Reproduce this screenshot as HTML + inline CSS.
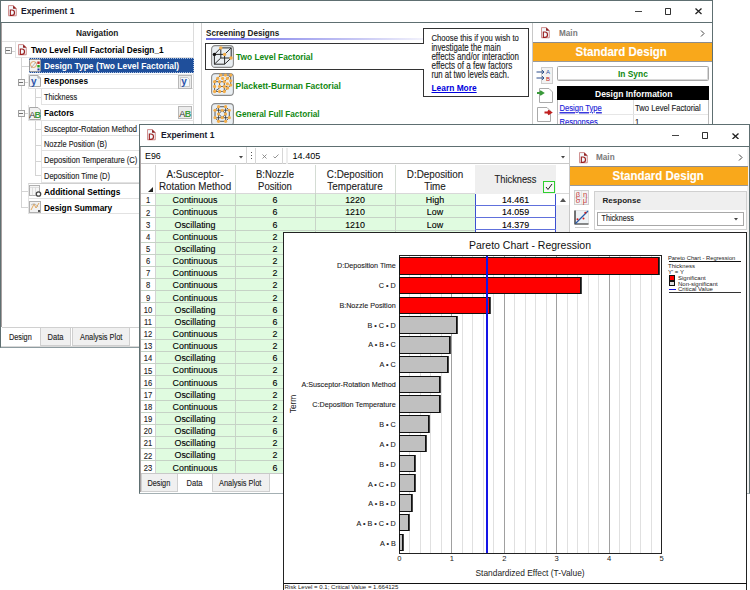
<!DOCTYPE html>
<html><head><meta charset="utf-8">
<style>
*{box-sizing:border-box;margin:0;padding:0}
html,body{width:750px;height:590px;overflow:hidden;background:#fff;font-family:"Liberation Sans",sans-serif;color:#000}
.a{position:absolute}
.t{position:absolute;white-space:nowrap;line-height:1}
.b{font-weight:bold}
.k{-webkit-text-stroke:0.12px currentColor}
.s28{transform:scaleY(1.28);transform-origin:0 84.65%;-webkit-text-stroke:0.1px currentColor}
.s12{transform:scaleY(1.12);transform-origin:0 84.65%;-webkit-text-stroke:0.1px currentColor}
.s17{transform:scaleY(1.17);transform-origin:0 84.65%;-webkit-text-stroke:0.1px currentColor}
</style></head><body>

<!-- ============ BACK WINDOW ============ -->
<div class="a" id="w1" style="left:0;top:0;width:713px;height:348px;background:#fff;border:1px solid #5e6f71;border-bottom-color:#8e9ca0">
</div>
<div class="a" style="left:1px;top:23px;width:1px;height:304px;background:#a8a0a0"></div>
<div class="a" style="left:1px;top:346px;width:711px;height:1px;background:#d8d8d8"></div>
<!-- title bar -->
<div class="a" style="left:1px;top:22px;width:711px;height:1px;background:#5e6f71"></div>
<svg class="a" style="left:8px;top:5px" width="9" height="12" viewBox="0 0 10 13"><path d="M0.5 0.5H6L9.2 3.7V11.8H0.5Z" fill="#f3f8fb" stroke="#c98080" stroke-width="1"/><path d="M5.6 0.3L9.4 4.1H5.6Z" fill="#8e1b1b"/><path d="M2.6 5.4H4.4Q7.2 5.4 7.2 8.4Q7.2 11.3 4.4 11.3H2.6Z" fill="none" stroke="#9b2020" stroke-width="1.3"/></svg>
<div class="t b" style="left:21px;top:7px;font-size:8.5px;color:#1a1a2e">Experiment 1</div>
<!-- min max close -->
<div class="a" style="left:635px;top:11px;width:6.5px;height:1.2px;background:#444"></div>
<div class="a" style="left:665px;top:8.3px;width:6.3px;height:6.3px;border:1.2px solid #333;border-radius:.8px"></div>
<svg class="a" style="left:694.5px;top:8.3px" width="7" height="6.5" viewBox="0 0 7 6.5"><path d="M0.5 0.5L6.5 6M6.5 0.5L0.5 6" stroke="#222" stroke-width="1.3"/></svg>

<!-- left nav panel -->
<div class="a" style="left:2px;top:23px;width:192px;height:304px;border-right:1px solid #dcdcdc;background:#fff"></div>
<div class="t b" style="left:76px;top:29px;font-size:8.3px;color:#1a1a1a">Navigation</div>
<div class="a" style="left:2px;top:41px;width:192px;height:1px;background:#e2e2e2"></div>

<!-- tree lines -->
<div class="a" style="left:21px;top:57.5px;width:1px;height:150px;background:#d4d4d4"></div>
<div class="a" style="left:22px;top:65.5px;width:7px;height:1px;background:#d4d4d4"></div>
<div class="a" style="left:35px;top:88.5px;width:1px;height:87px;background:#d4d4d4"></div>
<div class="a" style="left:35px;top:97px;width:6px;height:1px;background:#d4d4d4"></div>
<div class="a" style="left:35px;top:128.5px;width:6px;height:1px;background:#d4d4d4"></div>
<div class="a" style="left:35px;top:144.5px;width:6px;height:1px;background:#d4d4d4"></div>
<div class="a" style="left:35px;top:160.5px;width:6px;height:1px;background:#d4d4d4"></div>
<div class="a" style="left:35px;top:175.3px;width:6px;height:1px;background:#d4d4d4"></div>
<div class="a" style="left:22px;top:191px;width:6px;height:1px;background:#d4d4d4"></div>
<div class="a" style="left:22px;top:207px;width:6px;height:1px;background:#d4d4d4"></div>
<div class="a" style="left:11px;top:50.5px;width:4px;height:1px;background:#d4d4d4"></div>
<div class="a" style="left:24px;top:81.5px;width:4px;height:1px;background:#d4d4d4"></div>
<div class="a" style="left:24px;top:112.5px;width:4px;height:1px;background:#d4d4d4"></div>
<div class="a" style="left:15px;top:41.5px;width:179px;height:16px;border-left:1px solid #e2e2e2;border-bottom:1px solid #e2e2e2"></div>
<div class="a" style="left:4.5px;top:47px;width:7px;height:7px;border:1px solid #a0a0a0;background:#f8f8f8"></div>
<div class="a" style="left:6.0px;top:50px;width:4px;height:1px;background:#707070"></div>
<svg class="a" style="left:18px;top:44px" width="9" height="12" viewBox="0 0 10 13"><path d="M0.5 0.5H6L9.2 3.7V11.8H0.5Z" fill="#f3f8fb" stroke="#c98080" stroke-width="1"/><path d="M5.6 0.3L9.4 4.1H5.6Z" fill="#8e1b1b"/><path d="M2.6 5.4H4.4Q7.2 5.4 7.2 8.4Q7.2 11.3 4.4 11.3H2.6Z" fill="none" stroke="#9b2020" stroke-width="1.3"/></svg>
<div class="t b" style="left:31px;top:46px;font-size:8.3px;color:#000">Two Level Full Factorial Design_1</div>
<div class="a" style="left:28.5px;top:58px;width:165px;height:14.5px;background:#1f4f9b;border:1px dotted #a8bedf"></div>
<svg class="a" style="left:29px;top:59px" width="12" height="13" viewBox="0 0 12 13"><rect x="0.5" y="0.5" width="11" height="12" rx="1" fill="#f2f2f2" stroke="#9a9a9a"/><circle cx="4.5" cy="5.5" r="3" fill="none" stroke="#e0a060" stroke-width="1"/><path d="M2 9L7 3" stroke="#999" stroke-width=".7"/><rect x="8.3" y="2.5" width="2.4" height="2.4" fill="#c02020"/><rect x="8.3" y="6" width="2.4" height="2.4" fill="#20a020"/><rect x="8.5" y="9.5" width="2" height="2" fill="#2030a0"/></svg>
<div class="t b" style="left:44px;top:62px;font-size:8.45px;color:#fff">Design Type (Two Level Factorial)</div>
<div class="a" style="left:28px;top:73.5px;width:166px;height:15px;border-left:1px solid #e2e2e2;border-bottom:1px solid #e2e2e2;border-top:1px solid #e2e2e2"></div>
<div class="a" style="left:17.5px;top:78.5px;width:7px;height:7px;border:1px solid #a0a0a0;background:#f8f8f8"></div>
<div class="a" style="left:19.0px;top:81.5px;width:4px;height:1px;background:#707070"></div>
<svg class="a" style="left:29px;top:75px" width="12" height="12" viewBox="0 0 12 12"><path d="M0.5 0.5H9L11.5 3V11.5H0.5Z" fill="#eef4f8" stroke="#a8a8a8"/><path d="M9 0.5V3H11.5" fill="none" stroke="#a8a8a8"/><text x="2" y="9.5" font-family="Liberation Sans" font-size="10" font-weight="bold" fill="#2c52a8">y</text></svg>
<div class="t b" style="left:44px;top:78px;font-size:8.25px;color:#000">Responses</div>
<svg class="a" style="left:178px;top:74.5px" width="14" height="14" viewBox="0 0 14 14"><rect x="0.5" y="0.5" width="13" height="13" fill="#ececec" stroke="#b8b8b8"/><path d="M2.5 2.5H9.5L11.5 4.5V11.5H2.5Z" fill="#f4f8fb" stroke="#b0b0b0" stroke-width=".6"/><text x="3.3" y="10.3" font-family="Liberation Sans" font-size="10" font-weight="bold" fill="#2c52a8">y</text></svg>
<div class="a" style="left:41px;top:88.5px;width:153px;height:16px;border-left:1px solid #e2e2e2;border-bottom:1px solid #e2e2e2"></div>
<div class="t s28" style="left:44px;top:93.5px;font-size:7.35px;color:#222">Thickness</div>
<div class="a" style="left:28px;top:104.5px;width:166px;height:16px;border-left:1px solid #e2e2e2;border-bottom:1px solid #e2e2e2"></div>
<div class="a" style="left:17.5px;top:109.5px;width:7px;height:7px;border:1px solid #a0a0a0;background:#f8f8f8"></div>
<div class="a" style="left:19.0px;top:112.5px;width:4px;height:1px;background:#707070"></div>
<svg class="a" style="left:29px;top:106.5px" width="12" height="13" viewBox="0 0 12 13"><path d="M0.5 0.5H9L11.5 3V12.5H0.5Z" fill="#f2f2f2" stroke="#a8a8a8"/><text x="0.3" y="10.5" font-family="Liberation Sans" font-size="9" fill="#333">A</text><text x="5.6" y="10.5" font-family="Liberation Sans" font-size="9" font-weight="bold" fill="#3c9a3c">B</text></svg>
<div class="t b" style="left:44px;top:109px;font-size:8.3px;color:#000">Factors</div>
<svg class="a" style="left:178px;top:106px" width="14" height="13" viewBox="0 0 14 13"><rect x="0.5" y="0.5" width="13" height="12" fill="#ececec" stroke="#b8b8b8"/><text x="1.3" y="10.5" font-family="Liberation Sans" font-size="9" fill="#333">A</text><text x="6.8" y="10.5" font-family="Liberation Sans" font-size="9" font-weight="bold" fill="#3c9a3c">B</text></svg>
<div class="a" style="left:41px;top:120.5px;width:153px;height:15.3px;border-left:1px solid #e2e2e2;border-bottom:1px solid #e2e2e2"></div>
<div class="t s28" style="left:44px;top:125.7px;font-size:7.65px;color:#222">Susceptor-Rotation Method</div>
<div class="a" style="left:41px;top:135.3px;width:153px;height:16.2px;border-left:1px solid #e2e2e2;border-bottom:1px solid #e2e2e2"></div>
<div class="t s28" style="left:44px;top:141.0px;font-size:7.4px;color:#222">Nozzle Position (B)</div>
<div class="a" style="left:41px;top:151px;width:153px;height:16.5px;border-left:1px solid #e2e2e2;border-bottom:1px solid #e2e2e2"></div>
<div class="t s28" style="left:44px;top:156.8px;font-size:7.62px;color:#222">Deposition Temperature (C)</div>
<div class="a" style="left:41px;top:167px;width:153px;height:16.0px;border-left:1px solid #e2e2e2;border-bottom:1px solid #e2e2e2"></div>
<div class="t s28" style="left:44px;top:172.6px;font-size:7.47px;color:#222">Deposition Time (D)</div>
<div class="a" style="left:28px;top:182.5px;width:166px;height:16px;border-left:1px solid #e2e2e2;border-bottom:1px solid #e2e2e2;border-top:1px solid #d0d0d0"></div>
<svg class="a" style="left:29px;top:185px" width="13" height="12" viewBox="0 0 13 12"><rect x="0.5" y="0.5" width="10" height="10" fill="#f6f6f6" stroke="#b0b0b0"/><path d="M0.5 2.5H10.5M3.5 2.5V10.5M6.5 2.5V10.5" stroke="#d0d0d0" stroke-width=".6"/><circle cx="9.5" cy="9" r="2.2" fill="#fff" stroke="#444" stroke-width="1.3"/></svg>
<div class="t b" style="left:44px;top:188px;font-size:8.4px;color:#000">Additional Settings</div>
<div class="a" style="left:28px;top:198.5px;width:166px;height:15.5px;border-left:1px solid #e2e2e2;border-bottom:1px solid #e2e2e2"></div>
<svg class="a" style="left:29px;top:200.5px" width="12" height="12" viewBox="0 0 12 12"><rect x="0.5" y="0.5" width="11" height="11" fill="#f2f2f2" stroke="#b0b0b0"/><path d="M2 9L5 3L7 7L10 2" fill="none" stroke="#e0a050" stroke-width=".9"/><path d="M2 4Q6 1 9 6" fill="none" stroke="#999" stroke-width=".6"/><rect x="9" y="9" width="2" height="2" fill="#555"/></svg>
<div class="t b" style="left:44px;top:203.5px;font-size:8.35px;color:#000">Design Summary</div>

<!-- back tabs -->
<div class="a" style="left:2px;top:327px;width:710px;height:1px;background:#d0d0d0"></div>
<div class="a" style="left:40px;top:328px;width:31px;height:18px;background:#f0f0f0;border:1px solid #cfcfcf;border-top:none"></div>
<div class="a" style="left:72px;top:328px;width:58px;height:18px;background:#f0f0f0;border:1px solid #cfcfcf;border-top:none"></div>
<div class="t s28" style="left:9px;top:334px;font-size:7.3px;color:#222">Design</div>
<div class="t s28" style="left:47.5px;top:334px;font-size:7.55px;color:#222">Data</div>
<div class="t s28" style="left:80px;top:334px;font-size:7.4px;color:#222">Analysis Plot</div>

<!-- splitter / middle panel -->
<div class="a" style="left:201px;top:23px;width:1px;height:304px;background:#d0d0d0"></div>
<div class="t b" style="left:206px;top:30px;font-size:8.15px;color:#222">Screening Designs</div>
<div class="a" style="left:206px;top:38px;width:220px;height:1.5px;background:linear-gradient(90deg,#7070e8,#c8c8f4 70%,#f4f4fc)"></div>
<div class="a" style="left:205px;top:43px;width:219px;height:27px;border:1px solid #333;border-right:none"></div>
<!-- icons -->
<svg class="a" style="left:211px;top:45px" width="23" height="23" viewBox="0 0 23 23"><rect x="0.6" y="0.6" width="21.8" height="21.8" rx="3.5" fill="#e9eef2" stroke="#8a8a8a" stroke-width="1.1"/><g fill="none" stroke="#2a2a2a" stroke-width="1"><path d="M3.4 9.4H13.6V19.2H3.4Z"/><path d="M9.8 2.9H20.2V13H9.8Z"/><path d="M3.4 9.4L9.8 2.9M13.6 9.4L20.2 2.9M13.6 19.2L20.2 13M3.4 19.2L9.8 13"/></g><circle cx="3.4" cy="9.4" r="1.7" fill="#111"/><g fill="#f4ae4a"><circle cx="9.8" cy="2.9" r="1.7"/><circle cx="13.6" cy="9.4" r="1.7"/><circle cx="20" cy="13" r="1.7"/></g></svg>
<svg class="a" style="left:210.5px;top:73.3px" width="23" height="23" viewBox="0 0 23 23"><rect x="0.6" y="0.6" width="21.8" height="21.8" rx="3.5" fill="#e9eef2" stroke="#8a8a8a" stroke-width="1.1"/><g fill="none" stroke="#333" stroke-width=".8"><path d="M3.6 8.7L9.7 2.1H19.7V12.1L13.3 18.5H3.6Z"/><path d="M3.6 8.7H13.3V18.5M13.3 8.7L19.7 2.1M8.6 8.7V15L5 17.5M8.6 13.5H16.4"/></g><g fill="#f4ae4a"><circle cx="9.7" cy="2.1" r="1.65"/><circle cx="14.5" cy="2.1" r="1.65"/><circle cx="19.7" cy="2.1" r="1.65"/><circle cx="6.66" cy="5.4" r="1.65"/><circle cx="11.6" cy="5.4" r="1.65"/><circle cx="16.4" cy="5.4" r="1.65"/><circle cx="19.7" cy="7.8" r="1.65"/><circle cx="3.6" cy="8.7" r="1.65"/><circle cx="8.6" cy="8.7" r="1.65"/><circle cx="13.3" cy="8.7" r="1.65"/><circle cx="16.4" cy="10.9" r="1.65"/><circle cx="19.7" cy="12.1" r="1.65"/><circle cx="3.6" cy="13.5" r="1.65"/><circle cx="8.6" cy="13.5" r="1.65"/><circle cx="13.3" cy="13.5" r="1.65"/><circle cx="16.4" cy="15.2" r="1.65"/><circle cx="3.6" cy="18.5" r="1.65"/><circle cx="8.6" cy="18.5" r="1.65"/><circle cx="13.3" cy="18.5" r="1.65"/></g></svg>
<svg class="a" style="left:210.8px;top:103px" width="23" height="23" viewBox="0 0 23 23"><rect x="0.6" y="0.6" width="21.8" height="21.8" rx="3.5" fill="#e9eef2" stroke="#8a8a8a" stroke-width="1.1"/><g fill="none" stroke="#333" stroke-width=".8"><path d="M7.54 3.71H14.6L18.3 7.24V14.7L14.6 18.3H7.54L4 14.7V7.24Z"/><path d="M4 7.24H18.3M4 14.7H18.3M7.54 3.71V18.3M14.6 3.71V18.3M7.54 11L11.3 7.24L14.6 11L11.3 14.7Z"/></g><g fill="#f4ae4a"><circle cx="7.54" cy="3.71" r="1.6"/><circle cx="14.6" cy="3.71" r="1.6"/><circle cx="4" cy="7.24" r="1.6"/><circle cx="11.3" cy="7.24" r="1.6"/><circle cx="18.3" cy="7.24" r="1.6"/><circle cx="7.54" cy="11" r="1.6"/><circle cx="14.6" cy="11" r="1.6"/><circle cx="4" cy="14.7" r="1.6"/><circle cx="11.3" cy="14.7" r="1.6"/><circle cx="18.3" cy="14.7" r="1.6"/><circle cx="7.54" cy="18.3" r="1.6"/><circle cx="14.6" cy="18.3" r="1.6"/></g></svg>
<div class="t b" style="left:236px;top:52.7px;font-size:8.35px;color:#118811">Two Level Factorial</div>
<div class="t b" style="left:235.5px;top:81.7px;font-size:8.5px;color:#118811">Plackett-Burman Factorial</div>
<div class="t b" style="left:235.5px;top:110.8px;font-size:8.22px;color:#118811">General Full Factorial</div>

<!-- tooltip -->
<div class="a" style="left:423px;top:28px;width:106px;height:69px;border:1px solid #333;background:#fff"></div>
<div class="a" style="left:422px;top:44px;width:3px;height:25px;background:#fff"></div>
<div class="t s28" style="left:431.4px;top:35.37px;font-size:7.72px;color:#222">Choose this if you wish to</div>
<div class="t s28" style="left:431.4px;top:44.55px;font-size:7.80px;color:#222">investigate the main</div>
<div class="t s28" style="left:431.4px;top:53.63px;font-size:8.00px;color:#222">effects and/or interaction</div>
<div class="t s28" style="left:431.4px;top:62.89px;font-size:8.10px;color:#222">effects of a few factors</div>
<div class="t s28" style="left:431.4px;top:72.18px;font-size:7.82px;color:#222">run at two levels each.</div>
<div class="t b" style="left:431.5px;top:84px;font-size:8.4px;color:#0000dd;text-decoration:underline">Learn More</div>

<!-- right panel back -->
<div class="a" style="left:532px;top:23px;width:1px;height:304px;background:#c8c8c8"></div>
<svg class="a" style="left:541px;top:27px" width="9" height="12" viewBox="0 0 10 13"><path d="M0.5 0.5H6L9.2 3.7V11.8H0.5Z" fill="#f3f8fb" stroke="#c98080" stroke-width="1"/><path d="M5.6 0.3L9.4 4.1H5.6Z" fill="#8e1b1b"/><path d="M2.6 5.4H4.4Q7.2 5.4 7.2 8.4Q7.2 11.3 4.4 11.3H2.6Z" fill="none" stroke="#9b2020" stroke-width="1.3"/></svg>
<div class="t b" style="left:559px;top:30px;font-size:8.2px;color:#7a7a7a">Main</div>
<svg class="a" style="left:700px;top:30px" width="5" height="7" viewBox="0 0 5 7"><path d="M1 0.5L4 3.5L1 6.5" fill="none" stroke="#444" stroke-width="1"/></svg>
<div class="a" style="left:533px;top:42px;width:179px;height:20px;background:#f9a81b;border-top:1px solid #8c8c8c;border-bottom:1px solid #9a9a9a"></div>
<div class="t b s12" style="left:575.5px;top:46.5px;font-size:11.5px;color:#fff">Standard Design</div>
<!-- side icons -->
<svg class="a" style="left:536px;top:67px" width="17" height="17" viewBox="0 0 17 17"><rect x="5.5" y="0.5" width="11" height="16" fill="#f2f2f2" stroke="#ccc"/><path d="M0.5 5H8M6 3.2L8 5L6 6.8M0.5 11H8M6 9.2L8 11L6 12.8" stroke="#2a4d8a" stroke-width="1" fill="none"/><text x="10" y="7" font-size="6" fill="#2a4d9a" font-family="Liberation Sans">A</text><text x="10" y="14" font-size="6" fill="#c02020" font-family="Liberation Sans">B</text></svg>
<svg class="a" style="left:537px;top:88px" width="16" height="15" viewBox="0 0 16 15"><path d="M2.5 0.5H12L15.5 4V14.5H2.5Z" fill="#fff" stroke="#aaa"/><path d="M0 5H5M3 3L6 5L3 7" stroke="#3a9a3a" stroke-width="2" fill="none"/></svg>
<svg class="a" style="left:537px;top:107px" width="16" height="15" viewBox="0 0 16 15"><path d="M0.5 0.5H10L13.5 4V14.5H0.5Z" fill="#fff" stroke="#aaa"/><path d="M7.5 5.5H13M11 3.5L14 5.5L11 7.5" stroke="#c02020" stroke-width="2" fill="none"/></svg>
<div class="a" style="left:557px;top:66px;width:152px;height:15px;border:1px solid #a8a8a8;border-radius:1.5px;box-shadow:inset -1px -1px 0 #d8d8d8;background:#fff"></div>
<div class="t b" style="left:618px;top:70.3px;font-size:8.4px;color:#118811">In Sync</div>
<div class="a" style="left:557px;top:86px;width:152px;height:14px;background:#000"></div>
<div class="t b" style="left:595px;top:90.3px;font-size:8.5px;color:#fff">Design Information</div>
<div class="a" style="left:557px;top:100px;width:152px;height:30px;border-left:1px solid #bbb;border-right:1px solid #bbb"></div>
<div class="a" style="left:633px;top:100px;width:1px;height:30px;background:#ddd"></div>
<div class="a" style="left:558px;top:114px;width:150px;height:1px;background:#e6e6e6"></div>
<div class="t s28" style="left:559.5px;top:105.2px;font-size:7.65px;color:#1a1ad8;text-decoration:underline">Design Type</div>
<div class="t s28" style="left:635px;top:105.2px;font-size:7.65px;color:#222">Two Level Factorial</div>
<div class="t s28" style="left:559.5px;top:119.2px;font-size:7.65px;color:#1a1ad8;text-decoration:underline">Responses</div>
<div class="t s28" style="left:635px;top:119.2px;font-size:7.65px;color:#222">1</div>

<!-- ============ MIDDLE WINDOW ============ -->
<div class="a" id="w2" style="left:139px;top:124px;width:611px;height:370px;background:#fff;border:1px solid #5e6f71;border-bottom-color:#a4b0b3"></div>
<div class="a" style="left:140px;top:147px;width:1px;height:345px;background:#a8a0a0"></div>
<div class="a" style="left:747px;top:147px;width:2px;height:346px;background:#f2f2f2"></div>
<div class="a" style="left:140px;top:146px;width:609px;height:1px;background:#5e6f71"></div>
<svg class="a" style="left:147px;top:129px" width="9" height="12" viewBox="0 0 10 13"><path d="M0.5 0.5H6L9.2 3.7V11.8H0.5Z" fill="#f3f8fb" stroke="#c98080" stroke-width="1"/><path d="M5.6 0.3L9.4 4.1H5.6Z" fill="#8e1b1b"/><path d="M2.6 5.4H4.4Q7.2 5.4 7.2 8.4Q7.2 11.3 4.4 11.3H2.6Z" fill="none" stroke="#9b2020" stroke-width="1.3"/></svg>
<div class="t b" style="left:161px;top:131px;font-size:8.5px;color:#1a1a2e">Experiment 1</div>
<div class="a" style="left:672px;top:135px;width:6.5px;height:1.2px;background:#444"></div>
<div class="a" style="left:702px;top:132.3px;width:6.3px;height:6.3px;border:1.2px solid #333;border-radius:.8px"></div>
<svg class="a" style="left:732px;top:132.5px" width="7" height="6.5" viewBox="0 0 7 6.5"><path d="M0.5 0.5L6.5 6M6.5 0.5L0.5 6" stroke="#222" stroke-width="1.3"/></svg>


<!-- formula bar -->
<div class="a" style="left:141px;top:147px;width:428px;height:17px;background:#fff;border-bottom:1px solid #c8c8c8"></div>
<div class="a" style="left:141px;top:147px;width:106px;height:17px;border-right:1px solid #d6d6d6"></div>
<div class="t" style="left:145px;top:152px;font-size:8.9px">E96</div>
<svg class="a" style="left:239px;top:155.5px" width="4" height="3" viewBox="0 0 4 3"><path d="M0 0H4L2 2.5Z" fill="#444"/></svg>
<div class="a" style="left:251px;top:152px;width:1px;height:1px;background:#555"></div>
<div class="a" style="left:251px;top:155px;width:1px;height:1px;background:#555"></div>
<div class="a" style="left:251px;top:158px;width:1px;height:1px;background:#555"></div>
<div class="a" style="left:255px;top:148px;width:28px;height:16px;border-left:1px solid #d6d6d6;border-right:1px solid #d6d6d6"></div>
<svg class="a" style="left:262px;top:154px" width="5" height="5" viewBox="0 0 5 5"><path d="M0.5 0.5L4.5 4.5M4.5 0.5L0.5 4.5" stroke="#777" stroke-width=".8"/></svg>
<svg class="a" style="left:273px;top:154px" width="6" height="5" viewBox="0 0 6 5"><path d="M0.5 2.5L2 4L5.5 0.5" fill="none" stroke="#777" stroke-width=".8"/></svg>
<div class="a" style="left:286px;top:148px;width:2px;height:16px;background:#eee"></div>
<div class="t" style="left:292.5px;top:152px;font-size:9.1px">14.405</div>
<svg class="a" style="left:561px;top:155.5px" width="4" height="3" viewBox="0 0 4 3"><path d="M0 0H4L2 2.5Z" fill="#444"/></svg>

<!-- grid header -->
<div class="a" style="left:141px;top:165px;width:428px;height:28.6px;background:#fff;border-bottom:1px solid #d8d8d8"></div>
<div class="a" style="left:475px;top:165px;width:81px;height:28.6px;background:#efefef"></div>
<div class="a" style="left:155px;top:165px;width:1px;height:308px;background:#d8d8d8"></div>
<div class="a" style="left:235px;top:165px;width:1px;height:308px;background:#d4dcd4"></div>
<div class="a" style="left:315px;top:165px;width:1px;height:70px;background:#d4dcd4"></div>
<div class="a" style="left:395px;top:165px;width:1px;height:70px;background:#d4dcd4"></div>
<svg class="a" style="left:148px;top:187px" width="5" height="5" viewBox="0 0 5 5"><path d="M5 0V5H0Z" fill="#222"/></svg>
<div class="t s17" style="left:155px;width:80px;text-align:center;top:169.66px;font-size:9.85px;color:#222">A:Susceptor-</div>
<div class="t s17" style="left:155px;width:80px;text-align:center;top:181.66px;font-size:9.85px;color:#222">Rotation Method</div>
<div class="t s17" style="left:235px;width:80px;text-align:center;top:169.96px;font-size:9.5px;color:#222">B:Nozzle</div>
<div class="t s17" style="left:235px;width:80px;text-align:center;top:181.96px;font-size:9.5px;color:#222">Position</div>
<div class="t s17" style="left:315px;width:80px;text-align:center;top:169.66px;font-size:9.85px;color:#222">C:Deposition</div>
<div class="t s17" style="left:315px;width:80px;text-align:center;top:181.66px;font-size:9.85px;color:#222">Temperature</div>
<div class="t s17" style="left:395px;width:80px;text-align:center;top:169.66px;font-size:9.85px;color:#222">D:Deposition</div>
<div class="t s17" style="left:395px;width:80px;text-align:center;top:181.66px;font-size:9.85px;color:#222">Time</div>
<div class="t s17" style="left:475px;width:81px;text-align:center;top:176.13px;font-size:9.3px;color:#222">Thickness</div>
<div class="a" style="left:543px;top:181px;width:12px;height:12px;border:1px solid #2fcf2f;background:#f8f8f8"></div>
<svg class="a" style="left:545px;top:183px" width="8" height="8" viewBox="0 0 8 8"><path d="M1 4L3 6.5L7 1" fill="none" stroke="#222" stroke-width="1"/></svg>
<div class="a" style="left:155px;top:193.60px;width:320px;height:279.45px;background:#e0fbe0"></div>
<div class="a" style="left:155px;top:193px;width:1px;height:280px;background:#d4d4d4"></div>
<div class="a" style="left:235px;top:193px;width:1px;height:280px;background:#c8d4c8"></div>
<div class="a" style="left:315px;top:193px;width:1px;height:40px;background:#c8d4c8"></div>
<div class="a" style="left:395px;top:193px;width:1px;height:40px;background:#c8d4c8"></div>
<div class="a" style="left:141px;top:205.25px;width:334px;height:1px;background:#c6d2c6"></div>
<div class="a" style="left:141px;top:217.40px;width:334px;height:1px;background:#c6d2c6"></div>
<div class="a" style="left:141px;top:229.55px;width:334px;height:1px;background:#c6d2c6"></div>
<div class="a" style="left:141px;top:241.70px;width:334px;height:1px;background:#c6d2c6"></div>
<div class="a" style="left:141px;top:253.85px;width:334px;height:1px;background:#c6d2c6"></div>
<div class="a" style="left:141px;top:266.00px;width:334px;height:1px;background:#c6d2c6"></div>
<div class="a" style="left:141px;top:278.15px;width:334px;height:1px;background:#c6d2c6"></div>
<div class="a" style="left:141px;top:290.30px;width:334px;height:1px;background:#c6d2c6"></div>
<div class="a" style="left:141px;top:302.45px;width:334px;height:1px;background:#c6d2c6"></div>
<div class="a" style="left:141px;top:314.60px;width:334px;height:1px;background:#c6d2c6"></div>
<div class="a" style="left:141px;top:326.75px;width:334px;height:1px;background:#c6d2c6"></div>
<div class="a" style="left:141px;top:338.90px;width:334px;height:1px;background:#c6d2c6"></div>
<div class="a" style="left:141px;top:351.05px;width:334px;height:1px;background:#c6d2c6"></div>
<div class="a" style="left:141px;top:363.20px;width:334px;height:1px;background:#c6d2c6"></div>
<div class="a" style="left:141px;top:375.35px;width:334px;height:1px;background:#c6d2c6"></div>
<div class="a" style="left:141px;top:387.50px;width:334px;height:1px;background:#c6d2c6"></div>
<div class="a" style="left:141px;top:399.65px;width:334px;height:1px;background:#c6d2c6"></div>
<div class="a" style="left:141px;top:411.80px;width:334px;height:1px;background:#c6d2c6"></div>
<div class="a" style="left:141px;top:423.95px;width:334px;height:1px;background:#c6d2c6"></div>
<div class="a" style="left:141px;top:436.10px;width:334px;height:1px;background:#c6d2c6"></div>
<div class="a" style="left:141px;top:448.25px;width:334px;height:1px;background:#c6d2c6"></div>
<div class="a" style="left:141px;top:460.40px;width:334px;height:1px;background:#c6d2c6"></div>
<div class="a" style="left:141px;top:472.55px;width:334px;height:1px;background:#c6d2c6"></div>
<div class="t s17" style="left:141px;width:14px;text-align:center;top:197.40px;font-size:7.6px;color:#222">1</div>
<div class="t k" style="left:155px;width:80px;text-align:center;top:196.30px;font-size:8.9px">Continuous</div>
<div class="t k" style="left:235px;width:80px;text-align:center;top:196.30px;font-size:8.9px">6</div>
<div class="t k" style="left:315px;width:80px;text-align:center;top:196.30px;font-size:8.9px">1220</div>
<div class="t k" style="left:395px;width:80px;text-align:center;top:196.30px;font-size:8.9px">High</div>
<div class="t s17" style="left:141px;width:14px;text-align:center;top:209.55px;font-size:7.6px;color:#222">2</div>
<div class="t k" style="left:155px;width:80px;text-align:center;top:208.45px;font-size:8.9px">Continuous</div>
<div class="t k" style="left:235px;width:80px;text-align:center;top:208.45px;font-size:8.9px">6</div>
<div class="t k" style="left:315px;width:80px;text-align:center;top:208.45px;font-size:8.9px">1210</div>
<div class="t k" style="left:395px;width:80px;text-align:center;top:208.45px;font-size:8.9px">Low</div>
<div class="t s17" style="left:141px;width:14px;text-align:center;top:221.70px;font-size:7.6px;color:#222">3</div>
<div class="t k" style="left:155px;width:80px;text-align:center;top:220.60px;font-size:8.9px">Oscillating</div>
<div class="t k" style="left:235px;width:80px;text-align:center;top:220.60px;font-size:8.9px">6</div>
<div class="t k" style="left:315px;width:80px;text-align:center;top:220.60px;font-size:8.9px">1210</div>
<div class="t k" style="left:395px;width:80px;text-align:center;top:220.60px;font-size:8.9px">Low</div>
<div class="t s17" style="left:141px;width:14px;text-align:center;top:233.85px;font-size:7.6px;color:#222">4</div>
<div class="t k" style="left:155px;width:80px;text-align:center;top:232.75px;font-size:8.9px">Continuous</div>
<div class="t k" style="left:235px;width:80px;text-align:center;top:232.75px;font-size:8.9px">2</div>
<div class="t k" style="left:315px;width:80px;text-align:center;top:232.75px;font-size:8.9px">1220</div>
<div class="t k" style="left:395px;width:80px;text-align:center;top:232.75px;font-size:8.9px">High</div>
<div class="t s17" style="left:141px;width:14px;text-align:center;top:246.00px;font-size:7.6px;color:#222">5</div>
<div class="t k" style="left:155px;width:80px;text-align:center;top:244.90px;font-size:8.9px">Oscillating</div>
<div class="t k" style="left:235px;width:80px;text-align:center;top:244.90px;font-size:8.9px">2</div>
<div class="t s17" style="left:141px;width:14px;text-align:center;top:258.15px;font-size:7.6px;color:#222">6</div>
<div class="t k" style="left:155px;width:80px;text-align:center;top:257.05px;font-size:8.9px">Continuous</div>
<div class="t k" style="left:235px;width:80px;text-align:center;top:257.05px;font-size:8.9px">2</div>
<div class="t s17" style="left:141px;width:14px;text-align:center;top:270.30px;font-size:7.6px;color:#222">7</div>
<div class="t k" style="left:155px;width:80px;text-align:center;top:269.20px;font-size:8.9px">Continuous</div>
<div class="t k" style="left:235px;width:80px;text-align:center;top:269.20px;font-size:8.9px">2</div>
<div class="t s17" style="left:141px;width:14px;text-align:center;top:282.45px;font-size:7.6px;color:#222">8</div>
<div class="t k" style="left:155px;width:80px;text-align:center;top:281.35px;font-size:8.9px">Continuous</div>
<div class="t k" style="left:235px;width:80px;text-align:center;top:281.35px;font-size:8.9px">2</div>
<div class="t s17" style="left:141px;width:14px;text-align:center;top:294.60px;font-size:7.6px;color:#222">9</div>
<div class="t k" style="left:155px;width:80px;text-align:center;top:293.50px;font-size:8.9px">Continuous</div>
<div class="t k" style="left:235px;width:80px;text-align:center;top:293.50px;font-size:8.9px">2</div>
<div class="t s17" style="left:141px;width:14px;text-align:center;top:306.75px;font-size:7.6px;color:#222">10</div>
<div class="t k" style="left:155px;width:80px;text-align:center;top:305.65px;font-size:8.9px">Oscillating</div>
<div class="t k" style="left:235px;width:80px;text-align:center;top:305.65px;font-size:8.9px">6</div>
<div class="t s17" style="left:141px;width:14px;text-align:center;top:318.90px;font-size:7.6px;color:#222">11</div>
<div class="t k" style="left:155px;width:80px;text-align:center;top:317.80px;font-size:8.9px">Oscillating</div>
<div class="t k" style="left:235px;width:80px;text-align:center;top:317.80px;font-size:8.9px">6</div>
<div class="t s17" style="left:141px;width:14px;text-align:center;top:331.05px;font-size:7.6px;color:#222">12</div>
<div class="t k" style="left:155px;width:80px;text-align:center;top:329.95px;font-size:8.9px">Continuous</div>
<div class="t k" style="left:235px;width:80px;text-align:center;top:329.95px;font-size:8.9px">2</div>
<div class="t s17" style="left:141px;width:14px;text-align:center;top:343.20px;font-size:7.6px;color:#222">13</div>
<div class="t k" style="left:155px;width:80px;text-align:center;top:342.10px;font-size:8.9px">Continuous</div>
<div class="t k" style="left:235px;width:80px;text-align:center;top:342.10px;font-size:8.9px">2</div>
<div class="t s17" style="left:141px;width:14px;text-align:center;top:355.35px;font-size:7.6px;color:#222">14</div>
<div class="t k" style="left:155px;width:80px;text-align:center;top:354.25px;font-size:8.9px">Oscillating</div>
<div class="t k" style="left:235px;width:80px;text-align:center;top:354.25px;font-size:8.9px">6</div>
<div class="t s17" style="left:141px;width:14px;text-align:center;top:367.50px;font-size:7.6px;color:#222">15</div>
<div class="t k" style="left:155px;width:80px;text-align:center;top:366.40px;font-size:8.9px">Continuous</div>
<div class="t k" style="left:235px;width:80px;text-align:center;top:366.40px;font-size:8.9px">2</div>
<div class="t s17" style="left:141px;width:14px;text-align:center;top:379.65px;font-size:7.6px;color:#222">16</div>
<div class="t k" style="left:155px;width:80px;text-align:center;top:378.55px;font-size:8.9px">Continuous</div>
<div class="t k" style="left:235px;width:80px;text-align:center;top:378.55px;font-size:8.9px">6</div>
<div class="t s17" style="left:141px;width:14px;text-align:center;top:391.80px;font-size:7.6px;color:#222">17</div>
<div class="t k" style="left:155px;width:80px;text-align:center;top:390.70px;font-size:8.9px">Oscillating</div>
<div class="t k" style="left:235px;width:80px;text-align:center;top:390.70px;font-size:8.9px">2</div>
<div class="t s17" style="left:141px;width:14px;text-align:center;top:403.95px;font-size:7.6px;color:#222">18</div>
<div class="t k" style="left:155px;width:80px;text-align:center;top:402.85px;font-size:8.9px">Continuous</div>
<div class="t k" style="left:235px;width:80px;text-align:center;top:402.85px;font-size:8.9px">2</div>
<div class="t s17" style="left:141px;width:14px;text-align:center;top:416.10px;font-size:7.6px;color:#222">19</div>
<div class="t k" style="left:155px;width:80px;text-align:center;top:415.00px;font-size:8.9px">Oscillating</div>
<div class="t k" style="left:235px;width:80px;text-align:center;top:415.00px;font-size:8.9px">2</div>
<div class="t s17" style="left:141px;width:14px;text-align:center;top:428.25px;font-size:7.6px;color:#222">20</div>
<div class="t k" style="left:155px;width:80px;text-align:center;top:427.15px;font-size:8.9px">Oscillating</div>
<div class="t k" style="left:235px;width:80px;text-align:center;top:427.15px;font-size:8.9px">6</div>
<div class="t s17" style="left:141px;width:14px;text-align:center;top:440.40px;font-size:7.6px;color:#222">21</div>
<div class="t k" style="left:155px;width:80px;text-align:center;top:439.30px;font-size:8.9px">Oscillating</div>
<div class="t k" style="left:235px;width:80px;text-align:center;top:439.30px;font-size:8.9px">2</div>
<div class="t s17" style="left:141px;width:14px;text-align:center;top:452.55px;font-size:7.6px;color:#222">22</div>
<div class="t k" style="left:155px;width:80px;text-align:center;top:451.45px;font-size:8.9px">Oscillating</div>
<div class="t k" style="left:235px;width:80px;text-align:center;top:451.45px;font-size:8.9px">2</div>
<div class="t s17" style="left:141px;width:14px;text-align:center;top:464.70px;font-size:7.6px;color:#222">23</div>
<div class="t k" style="left:155px;width:80px;text-align:center;top:463.60px;font-size:8.9px">Continuous</div>
<div class="t k" style="left:235px;width:80px;text-align:center;top:463.60px;font-size:8.9px">6</div>
<!-- thickness blue cells -->
<div class="a" style="left:475px;top:193.6px;width:81px;height:40px;background:#fff;border-left:1.5px solid #3c4fd0;border-right:1.5px solid #3c4fd0"></div>
<div class="a" style="left:475px;top:205px;width:81px;height:1px;background:#6070dc"></div>
<div class="a" style="left:475px;top:217.2px;width:81px;height:1px;background:#6070dc"></div>
<div class="a" style="left:475px;top:229.3px;width:81px;height:1px;background:#6070dc"></div>
<div class="t k" style="left:475px;width:81px;text-align:center;top:196.30px;font-size:8.9px">14.461</div>
<div class="t k" style="left:475px;width:81px;text-align:center;top:208.45px;font-size:8.9px">14.059</div>
<div class="t k" style="left:475px;width:81px;text-align:center;top:220.60px;font-size:8.9px">14.379</div>
<div class="t k" style="left:475px;width:81px;text-align:center;top:232.75px;font-size:8.9px">14.2</div>
<!-- scrollbar -->
<div class="a" style="left:556px;top:205px;width:14px;height:290px;background:#f0f0f0"></div>
<svg class="a" style="left:560px;top:197.5px" width="6" height="4" viewBox="0 0 6 4"><path d="M0 4H6L3 0Z" fill="#555"/></svg>
<!-- mid tabs -->
<div class="a" style="left:141px;top:473px;width:428px;height:1px;background:#c8c8c8"></div>
<div class="a" style="left:141px;top:474px;width:37px;height:18px;background:#f0f0f0;border:1px solid #cfcfcf;border-top:none"></div>
<div class="a" style="left:212px;top:474px;width:58px;height:18px;background:#f0f0f0;border:1px solid #cfcfcf;border-top:none"></div>
<div class="t s28" style="left:147.5px;top:480px;font-size:7.3px;color:#222">Design</div>
<div class="t s28" style="left:186.5px;top:480px;font-size:7.55px;color:#222">Data</div>
<div class="t s28" style="left:219px;top:480px;font-size:7.4px;color:#222">Analysis Plot</div>

<!-- right panel mid -->
<div class="a" style="left:569px;top:147px;width:1px;height:346px;background:#c8c8c8"></div>
<svg class="a" style="left:578.5px;top:151.5px" width="9" height="12" viewBox="0 0 10 13"><path d="M0.5 0.5H6L9.2 3.7V11.8H0.5Z" fill="#f3f8fb" stroke="#c98080" stroke-width="1"/><path d="M5.6 0.3L9.4 4.1H5.6Z" fill="#8e1b1b"/><path d="M2.6 5.4H4.4Q7.2 5.4 7.2 8.4Q7.2 11.3 4.4 11.3H2.6Z" fill="none" stroke="#9b2020" stroke-width="1.3"/></svg>
<div class="t b" style="left:596px;top:154px;font-size:8.2px;color:#7a7a7a">Main</div>
<svg class="a" style="left:738px;top:154px" width="5" height="7" viewBox="0 0 5 7"><path d="M1 0.5L4 3.5L1 6.5" fill="none" stroke="#444" stroke-width="1"/></svg>
<div class="a" style="left:570px;top:166px;width:178px;height:20px;background:#f9a81b;border-top:1px solid #8c8c8c;border-bottom:1px solid #9a9a9a"></div>
<div class="t b s12" style="left:612.5px;top:170.5px;font-size:11.5px;color:#fff">Standard Design</div>
<svg class="a" style="left:574px;top:190px" width="15" height="15" viewBox="0 0 15 15"><rect x="0.5" y="0.5" width="14" height="14" fill="#f4f4f4" stroke="#cfcfcf"/><path d="M7.5 1V14M1 7.5H14" stroke="#e0e0e0" stroke-width=".8"/><g font-family="Liberation Sans" font-size="7.6" fill="#c23a3a" text-anchor="middle"><text x="4" y="6.6">&#946;</text><text x="11" y="6.6">&#951;</text><text x="4" y="13.4">&#963;</text><text x="11" y="13.4">&#956;</text></g></svg>
<svg class="a" style="left:574px;top:209.5px" width="15" height="15" viewBox="0 0 15 15"><rect x="1" y="0.5" width="13.5" height="13.5" fill="#eef2f5" stroke="#d0d0d0" stroke-width=".6"/><path d="M1 0.5V14H14.5" fill="none" stroke="#222" stroke-width="1.2"/><path d="M1.5 13.5L14 1" stroke="#2a5aa8" stroke-width="1.3"/><circle cx="3.5" cy="9.3" r="1" fill="#d02020"/><circle cx="9.5" cy="8.5" r="1" fill="#d02020"/><circle cx="11.3" cy="2.7" r="1" fill="#d02020"/></svg>
<div class="a" style="left:575px;top:227px;width:14px;height:1px;background:#ccc"></div>
<div class="a" style="left:594px;top:191px;width:153px;height:39px;border:1px solid #d0d0d0;background:#fff"></div>
<div class="a" style="left:595px;top:192px;width:151px;height:18px;background:#efefef"></div>
<div class="t b" style="left:602.5px;top:196.5px;font-size:8.05px;color:#222">Response</div>
<div class="a" style="left:597px;top:212px;width:147px;height:14px;border:1px solid #a8a8a8;background:#fff"></div>
<div class="t s28" style="left:601.5px;top:214.5px;font-size:7.2px;color:#222">Thickness</div>
<svg class="a" style="left:734px;top:218px" width="4" height="3" viewBox="0 0 4 3"><path d="M0 0H4L2 2.5Z" fill="#444"/></svg>

<div class="a" style="left:283px;top:232px;width:464px;height:370px;background:#fff;border:1px solid #222"></div>
<div class="t" style="left:469px;top:239.8px;font-size:10.5px;color:#111">Pareto Chart - Regression</div>
<div class="a" style="left:409px;top:256px;width:1px;height:297px;background:#e0e0e0"></div>
<div class="a" style="left:420px;top:256px;width:1px;height:297px;background:#e0e0e0"></div>
<div class="a" style="left:430px;top:256px;width:1px;height:297px;background:#e0e0e0"></div>
<div class="a" style="left:441px;top:256px;width:1px;height:297px;background:#e0e0e0"></div>
<div class="a" style="left:451px;top:256px;width:1px;height:297px;background:#a0a0a0"></div>
<div class="a" style="left:462px;top:256px;width:1px;height:297px;background:#e0e0e0"></div>
<div class="a" style="left:472px;top:256px;width:1px;height:297px;background:#e0e0e0"></div>
<div class="a" style="left:483px;top:256px;width:1px;height:297px;background:#e0e0e0"></div>
<div class="a" style="left:493px;top:256px;width:1px;height:297px;background:#e0e0e0"></div>
<div class="a" style="left:504px;top:256px;width:1px;height:297px;background:#a0a0a0"></div>
<div class="a" style="left:514px;top:256px;width:1px;height:297px;background:#e0e0e0"></div>
<div class="a" style="left:525px;top:256px;width:1px;height:297px;background:#e0e0e0"></div>
<div class="a" style="left:535px;top:256px;width:1px;height:297px;background:#e0e0e0"></div>
<div class="a" style="left:546px;top:256px;width:1px;height:297px;background:#e0e0e0"></div>
<div class="a" style="left:556px;top:256px;width:1px;height:297px;background:#a0a0a0"></div>
<div class="a" style="left:567px;top:256px;width:1px;height:297px;background:#e0e0e0"></div>
<div class="a" style="left:577px;top:256px;width:1px;height:297px;background:#e0e0e0"></div>
<div class="a" style="left:588px;top:256px;width:1px;height:297px;background:#e0e0e0"></div>
<div class="a" style="left:598px;top:256px;width:1px;height:297px;background:#e0e0e0"></div>
<div class="a" style="left:609px;top:256px;width:1px;height:297px;background:#a0a0a0"></div>
<div class="a" style="left:619px;top:256px;width:1px;height:297px;background:#e0e0e0"></div>
<div class="a" style="left:630px;top:256px;width:1px;height:297px;background:#e0e0e0"></div>
<div class="a" style="left:640px;top:256px;width:1px;height:297px;background:#e0e0e0"></div>
<div class="a" style="left:651px;top:256px;width:1px;height:297px;background:#e0e0e0"></div>
<div class="a" style="left:399px;top:255px;width:263px;height:299px;border:1px solid #222"></div>
<div class="a" style="left:399px;top:257.00px;width:259.58px;height:17.60px;background:#ff0000;border:1px solid #111;box-shadow:1px 0 0 #444"></div>
<div class="t s12" style="right:354.30px;top:262.00px;font-size:7.2px;color:#1a1a1a">D:Deposition Time</div>
<div class="a" style="left:399px;top:276.75px;width:182.49px;height:17.60px;background:#ff0000;border:1px solid #111;box-shadow:1px 0 0 #444"></div>
<div class="t s12" style="right:354.30px;top:281.87px;font-size:7.2px;color:#1a1a1a">C • D</div>
<div class="a" style="left:399px;top:296.50px;width:90.72px;height:17.60px;background:#ff0000;border:1px solid #111;box-shadow:1px 0 0 #444"></div>
<div class="t s12" style="right:354.30px;top:301.74px;font-size:7.2px;color:#1a1a1a">B:Nozzle Position</div>
<div class="a" style="left:399px;top:316.25px;width:58.21px;height:17.60px;background:#c0c0c0;border:1px solid #111;box-shadow:1px 0 0 #444"></div>
<div class="t s12" style="right:354.30px;top:321.61px;font-size:7.2px;color:#1a1a1a">B • C • D</div>
<div class="a" style="left:399px;top:336.00px;width:51.39px;height:17.60px;background:#c0c0c0;border:1px solid #111;box-shadow:1px 0 0 #444"></div>
<div class="t s12" style="right:354.30px;top:341.48px;font-size:7.2px;color:#1a1a1a">A • B • C</div>
<div class="a" style="left:399px;top:355.75px;width:48.77px;height:17.60px;background:#c0c0c0;border:1px solid #111;box-shadow:1px 0 0 #444"></div>
<div class="t s12" style="right:354.30px;top:361.35px;font-size:7.2px;color:#1a1a1a">A • C</div>
<div class="a" style="left:399px;top:375.50px;width:40.90px;height:17.60px;background:#c0c0c0;border:1px solid #111;box-shadow:1px 0 0 #444"></div>
<div class="t s12" style="right:354.30px;top:381.22px;font-size:7.2px;color:#1a1a1a">A:Susceptor-Rotation Method</div>
<div class="a" style="left:399px;top:395.25px;width:40.90px;height:17.60px;background:#c0c0c0;border:1px solid #111;box-shadow:1px 0 0 #444"></div>
<div class="t s12" style="right:354.30px;top:401.09px;font-size:7.2px;color:#1a1a1a">C:Deposition Temperature</div>
<div class="a" style="left:399px;top:415.00px;width:30.42px;height:17.60px;background:#c0c0c0;border:1px solid #111;box-shadow:1px 0 0 #444"></div>
<div class="t s12" style="right:354.30px;top:420.96px;font-size:7.2px;color:#1a1a1a">B • C</div>
<div class="a" style="left:399px;top:434.75px;width:26.74px;height:17.60px;background:#c0c0c0;border:1px solid #111;box-shadow:1px 0 0 #444"></div>
<div class="t s12" style="right:354.30px;top:440.83px;font-size:7.2px;color:#1a1a1a">A • D</div>
<div class="a" style="left:399px;top:454.50px;width:15.73px;height:17.60px;background:#c0c0c0;border:1px solid #111;box-shadow:1px 0 0 #444"></div>
<div class="t s12" style="right:354.30px;top:460.70px;font-size:7.2px;color:#1a1a1a">B • D</div>
<div class="a" style="left:399px;top:474.25px;width:15.73px;height:17.60px;background:#c0c0c0;border:1px solid #111;box-shadow:1px 0 0 #444"></div>
<div class="t s12" style="right:354.30px;top:480.57px;font-size:7.2px;color:#1a1a1a">A • C • D</div>
<div class="a" style="left:399px;top:494.00px;width:13.11px;height:17.60px;background:#c0c0c0;border:1px solid #111;box-shadow:1px 0 0 #444"></div>
<div class="t s12" style="right:354.30px;top:500.44px;font-size:7.2px;color:#1a1a1a">A • B • D</div>
<div class="a" style="left:399px;top:513.75px;width:10.49px;height:17.60px;background:#c0c0c0;border:1px solid #111;box-shadow:1px 0 0 #444"></div>
<div class="t s12" style="right:354.30px;top:520.31px;font-size:7.2px;color:#1a1a1a">A • B • C • D</div>
<div class="a" style="left:399px;top:533.50px;width:3.67px;height:17.60px;background:#c0c0c0;border:1px solid #111;box-shadow:1px 0 0 #444"></div>
<div class="t s12" style="right:354.30px;top:540.18px;font-size:7.2px;color:#1a1a1a">A • B</div>
<div class="a" style="left:485.67px;top:255.50px;width:2px;height:297.50px;background:#1414e6"></div>
<div class="t" style="left:389.40px;width:20px;text-align:center;top:554.5px;font-size:7.6px;color:#222">0</div>
<div class="t" style="left:441.84px;width:20px;text-align:center;top:554.5px;font-size:7.6px;color:#222">1</div>
<div class="t" style="left:494.28px;width:20px;text-align:center;top:554.5px;font-size:7.6px;color:#222">2</div>
<div class="t" style="left:546.72px;width:20px;text-align:center;top:554.5px;font-size:7.6px;color:#222">3</div>
<div class="t" style="left:599.16px;width:20px;text-align:center;top:554.5px;font-size:7.6px;color:#222">4</div>
<div class="t" style="left:651.60px;width:20px;text-align:center;top:554.5px;font-size:7.6px;color:#222">5</div>
<div class="t" style="left:475.5px;top:568.5px;font-size:8.4px;color:#222">Standardized Effect (T-Value)</div>
<div class="t" style="left:292.5px;top:404px;font-size:8.4px;color:#222;transform:translate(-50%,-50%) rotate(-90deg);transform-origin:center">Term</div>
<div class="t" style="left:668px;top:256px;font-size:5.8px;color:#222">Pareto Chart - Regression</div>
<div class="a" style="left:668.5px;top:261px;width:72.5px;height:1px;background:#111"></div>
<div class="t" style="left:668px;top:264px;font-size:6px;line-height:5.6px;color:#222">Thickness<br>Y' = Y</div>
<div class="a" style="left:668.5px;top:275px;width:6px;height:5.5px;background:#ff0000;border:1px solid #111"></div>
<div class="a" style="left:668.5px;top:280.5px;width:6px;height:5.5px;background:#ddd;border:1px solid #111"></div>
<div class="a" style="left:668.5px;top:288.5px;width:7.5px;height:1.3px;background:#1010e0"></div>
<div class="t" style="left:678px;top:276px;font-size:6px;line-height:5.6px;color:#222">Significant<br>Non-significant<br>Critical Value</div>
<div class="a" style="left:668.5px;top:291.5px;width:72.5px;height:1px;background:#333"></div>
<div class="a" style="left:284px;top:583px;width:463px;height:1px;background:#111"></div>
<div class="t" style="left:284.5px;top:584px;font-size:6.06px;color:#222">Risk Level = 0.1; Critical Value = 1.664125</div>
</body></html>
